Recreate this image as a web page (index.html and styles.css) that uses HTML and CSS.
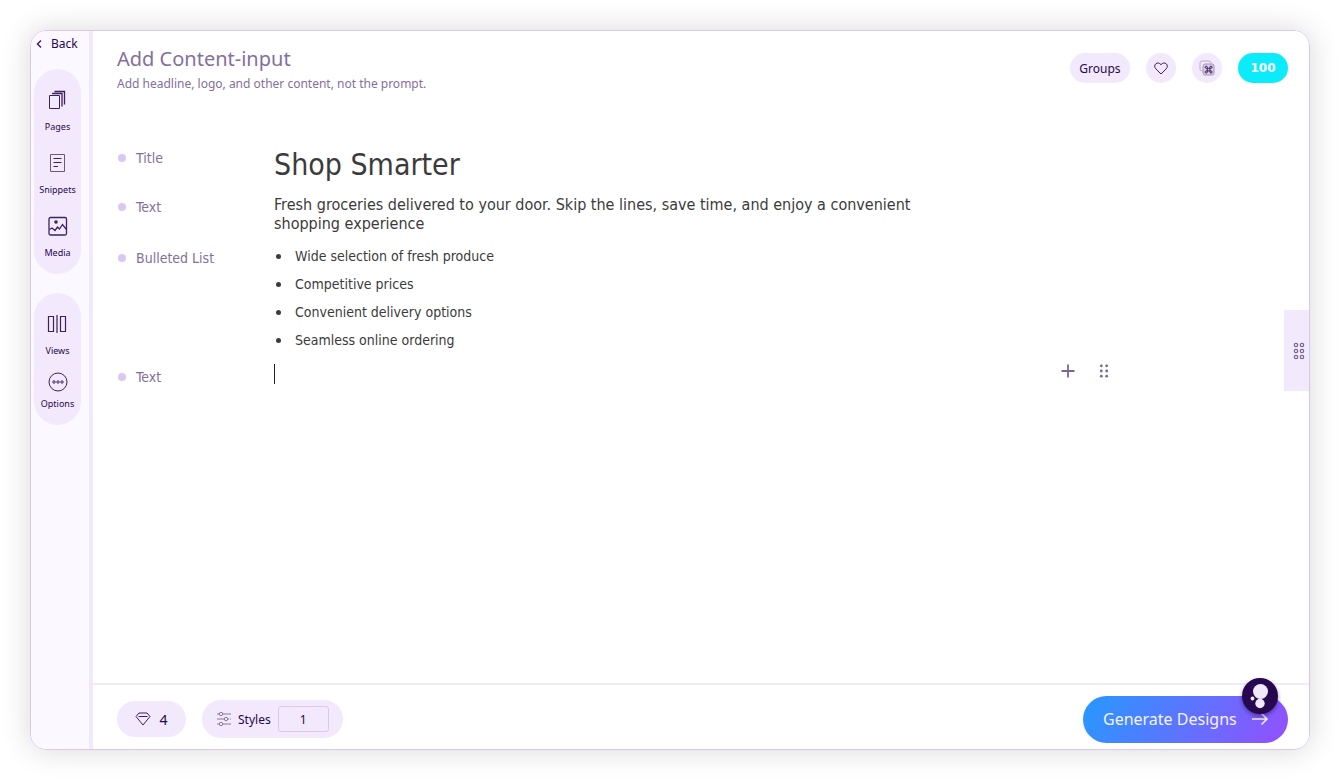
FILE: index.html
```html
<!DOCTYPE html>
<html lang="en">
<head>
<meta charset="utf-8">
<meta name="viewport" content="width=device-width, initial-scale=1">
<title>Add Content-input</title>
<link rel="stylesheet" href="styles.css">
</head>
<body>
<div class="window">
  <aside class="sidebar">
    <button class="back" type="button">
      <svg width="6" height="10" viewBox="0 0 6 10"><path d="M5 1.500 1.500 5 5 8.500" stroke-width="1.500"/></svg>
      Back
    </button>
    <nav class="pill pill-main">
      <button class="tool" type="button">
        <svg width="20" height="20" viewBox="0 0 20 20"><path d="M2.500 5.500h10v13h-10z"/><path d="M5 3.500h10v13M7.500 1.500h10v13" stroke-width="1.300"/></svg>
        Pages
      </button>
      <button class="tool" type="button">
        <svg width="20" height="20" viewBox="0 0 20 20"><path d="M3.500 1.500h14v17h-14z" stroke="#6b5684"/><path d="M6.500 5.500h8M6.500 9.500h8M6.500 13.500H11"/></svg>
        Snippets
      </button>
      <button class="tool" type="button">
        <svg width="20" height="20" viewBox="0 0 20 20"><rect x="1" y="1.500" width="17.500" height="17.500" rx="1.500" stroke-width="1.300"/><path d="m1.500 13.500 2.500-1.500 3 2.500L9.500 11l2 2 3-4.500 4 5" stroke-width="1.300"/><circle class="solid" cx="8" cy="6" r="1.800"/></svg>
        Media
      </button>
    </nav>
    <nav class="pill pill-view">
      <button class="tool" type="button">
        <svg width="20" height="20" viewBox="0 0 20 20"><path d="M1.500 2.500h5v15h-5zM13.500 2.500h5v15h-5zM10 1v18" stroke-width="1.200"/></svg>
        Views
      </button>
      <button class="tool tool-tight" type="button">
        <svg width="20" height="20" viewBox="0 0 20 20"><circle cx="10" cy="10" r="9"/><circle cx="6" cy="10" r="1.200"/><circle cx="10" cy="10" r="1.200"/><circle cx="14" cy="10" r="1.200"/></svg>
        Options
      </button>
    </nav>
  </aside>
  <main class="main">
    <header class="header">
      <div>
        <h1 class="page-title">Add Content-input</h1>
        <p class="subtitle">Add headline, logo, and other content, not the prompt.</p>
      </div>
      <div class="actions">
        <button class="chip groups" type="button">Groups</button>
        <button class="chip round" type="button" aria-label="Favourites">
          <svg width="14" height="13" viewBox="0 0 14 13"><path d="M7 12 1.800 6.800C.3 5.200.4 3 1.800 1.800 3.300.4 5.500.8 7 2.700 8.500.8 10.700.4 12.200 1.800c1.400 1.200 1.500 3.400 0 5z"/></svg>
        </button>
        <button class="chip round" type="button" aria-label="Shortcuts">
          <svg width="16" height="16" viewBox="0 0 16 16"><path d="M3.500 11H3a2 2 0 0 1-2-2V3a2 2 0 0 1 2-2h7a2 2 0 0 1 2 2v.5" stroke="#b8a9c6"/><rect x="4" y="4" width="11" height="11" rx="2" fill="#dbd0e8" stroke="#a493b4"/><path d="M8.300 8.300h2.600v2.600H8.300zM8.300 8.300H7.200a1.100 1.100 0 1 1 1.100-1.100zM10.900 8.300V7.200A1.100 1.100 0 1 1 12 8.300zM8.300 10.900V12a1.100 1.100 0 1 1-1.100-1.100zM10.900 10.900H12a1.100 1.100 0 1 1-1.100 1.100z"/></svg>
        </button>
        <button class="chip credits" type="button">100</button>
      </div>
    </header>
    <section class="editor">
      <div class="row">
        <span class="label">Title</span>
        <h2 class="headline">Shop Smarter</h2>
      </div>
      <div class="row row-text">
        <span class="label">Text</span>
        <p class="copy">Fresh groceries delivered to your door. Skip the lines, save time, and enjoy a convenient shopping experience</p>
      </div>
      <div class="row row-list">
        <span class="label">Bulleted List</span>
        <ul class="bullets">
          <li>Wide selection of fresh produce</li>
          <li>Competitive prices</li>
          <li>Convenient delivery options</li>
          <li>Seamless online ordering</li>
        </ul>
      </div>
      <div class="row row-new">
        <label class="label" for="new-text">Text</label>
        <div class="entry">
          <input class="entry-input" id="new-text" type="text">
          <div class="entry-tools">
            <button class="plain" type="button" aria-label="Add"><svg width="14" height="14" viewBox="0 0 14 14"><path d="M7 .500v13M.500 7h13" stroke="#7a6693" stroke-width="1.800"/></svg></button>
            <button class="plain" type="button" aria-label="Move"><svg width="10" height="14" viewBox="0 0 10 14"><g class="dots"><circle cx="2.300" cy="1.800" r="1.400"/><circle cx="7.700" cy="1.800" r="1.400"/><circle cx="2.300" cy="7" r="1.400"/><circle cx="7.700" cy="7" r="1.400"/><circle cx="2.300" cy="12.200" r="1.400"/><circle cx="7.700" cy="12.200" r="1.400"/></g></svg></button>
          </div>
        </div>
      </div>
    </section>
    <footer class="footer">
      <button class="chip gems" type="button">
        <svg width="16" height="14" viewBox="0 0 16 14"><path d="M4 1h8l3 3.500L8 13 1 4.500zM3.500 4.500h9"/></svg>
        4
      </button>
      <div class="chip styles">
        <svg width="14" height="14" viewBox="0 0 14 14"><g stroke="#8a789d"><path d="M0 2h2M6 2h8M0 7h7M11 7h1M13 7h1M0 12h2M6 12h8"/><circle cx="4" cy="2" r="1.700"/><circle cx="9" cy="7" r="1.700"/><circle cx="4" cy="12" r="1.700"/></g></svg>
        <label for="styles-count">Styles</label>
        <input class="count" id="styles-count" type="text" value="1">
      </div>
      <div class="submit">
        <button class="generate" type="button">
          Generate Designs
          <svg width="18" height="14" viewBox="0 0 18 14"><path d="M1 7h15M10.500 1.500 16 7l-5.500 5.500" stroke="#f2e8fc" stroke-width="1.600"/></svg>
        </button>
        <button class="helper" type="button" aria-label="Assistant">
          <svg width="36" height="36" viewBox="0 0 36 36"><g fill="#f2e8fc" stroke="none"><circle cx="18.500" cy="13.500" r="7.500"/><circle cx="18" cy="25.500" r="4.700"/><circle cx="10.500" cy="20.500" r="1.900"/></g></svg>
        </button>
      </div>
    </footer>
    <button class="drawer" type="button" aria-label="Open panel">
      <svg width="12" height="18" viewBox="0 0 12 18"><g stroke="#7a6693" stroke-width="1.200"><circle cx="3" cy="3" r="1.700"/><circle cx="9" cy="3" r="1.700"/><circle cx="3" cy="9" r="1.700"/><circle cx="9" cy="9" r="1.700"/><circle cx="3" cy="15" r="1.700"/><circle cx="9" cy="15" r="1.700"/></g></svg>
    </button>
  </main>
</div>
</body>
</html>
```
FILE: styles.css
```css
* { box-sizing: border-box; }
body {
  margin: 0;
  min-height: 100vh;
  padding: 30px 30px 31px;
  display: flex;
  background: #fff;
  color: #27074f;
  font-family: "Noto Sans", sans-serif;
}
button, input { font: inherit; color: inherit; margin: 0; padding: 0; border: 0; background: none; }
h1, h2, p, ul { margin: 0; padding: 0; font-weight: 400; }
svg { display: block; flex: none; fill: none; stroke: #3d2160; stroke-width: 1; }
.solid { fill: #3d2160; stroke: none; }
.dots { fill: #7a6693; stroke: none; }

.window {
  flex: 1;
  display: flex;
  border: 1px solid #dac8f0;
  border-radius: 16px;
  overflow: hidden;
  box-shadow: 0 0 30px rgba(0, 0, 0, 0.16);
}
.sidebar {
  width: 62px;
  flex: none;
  padding-left: 3px;
  border-right: 4px solid #f2e9fc;
  background: #fbf8ff;
  display: flex;
  flex-direction: column;
  align-items: flex-start;
}
.back { display: flex; align-items: center; gap: 9px; height: 25px; padding-left: 2px; font-size: 12px; }
.pill {
  width: 47px;
  border-radius: 24px;
  background: #f2e9fc;
  display: flex;
  flex-direction: column;
  align-items: center;
}
.pill-main { margin-top: 13px; padding: 21px 0 15px; gap: 20px; }
.pill-view { margin-top: 19px; padding: 21px 0 15px; gap: 15px; }
.tool {
  display: flex;
  flex-direction: column;
  align-items: center;
  gap: 10px;
  font-size: 9px;
  line-height: 13px;
}
.tool-tight { gap: 5px; }

.main { flex: 1; min-width: 0; position: relative; display: flex; flex-direction: column; background: #fff; }
.header { display: flex; justify-content: space-between; align-items: flex-start; padding: 14px 21px 0 24px; color: #846f9d; }
.page-title { font-size: 20px; line-height: 28px; }
.subtitle { font-size: 12px; line-height: 16px; margin-top: 3px; }
.actions { display: flex; gap: 16px; padding-top: 8px; }
.chip {
  display: flex;
  align-items: center;
  justify-content: center;
  border-radius: 20px;
  background: #f2e9fc;
  color: #27074f;
  font-size: 12px;
}
.groups { width: 60px; height: 30px; }
.round { width: 30px; height: 30px; }
.credits { width: 50px; height: 30px; background: #0cebfa; color: #fff; font-family: "DejaVu Sans", sans-serif; font-weight: 700; }

.editor { flex: 1; padding: 52px 24px 0; color: #3b3b3b; font-family: "DejaVu Sans Condensed", "Noto Sans", sans-serif; }
.row { display: grid; grid-template-columns: 157px 1fr; align-items: start; }
.label { display: flex; align-items: center; gap: 10px; margin-top: 4px; font-size: 14px; line-height: 20px; color: #846f9d; }
.label::before { content: ""; width: 8px; height: 8px; margin-left: 1px; border-radius: 50%; background: #dac8f0; }
.headline { font-size: 30px; line-height: 42px; }
.row-text { margin-top: 9px; }
.row-text .label { margin-top: 2px; }
.copy { max-width: 650px; font-size: 16px; line-height: 19px; }
.row-list { margin-top: 9px; }
.row-list .label { margin-top: 6px; }
.bullets { font-size: 14px; line-height: 28px; list-style: none; }
.bullets li { display: flex; align-items: center; gap: 14px; }
.bullets li::before { content: ""; width: 5px; height: 5px; margin-left: 2px; border-radius: 50%; background: #3b3b3b; }
.row-new { margin-top: 10px; }
.row-new .label { margin-top: 3px; }
.entry { display: flex; align-items: flex-start; max-width: 835px; }
.entry-input { flex: 1; min-width: 0; height: 20px; border-left: 1px solid #222; outline: 0; }
.entry-tools { display: flex; gap: 24px; }
.plain { display: flex; }

.footer { height: 66px; flex: none; display: flex; align-items: center; gap: 16px; padding: 4px 21px 0 24px; border-top: 2px solid #f2e9fc; }
.gems { width: 69px; height: 36px; gap: 8px; font-size: 14px; }
.styles { height: 38px; gap: 7px; padding: 0 14px 0 15px; }
.count { width: 51px; height: 26px; border: 1px solid #dac8f0; border-radius: 3px; text-align: center; }
.submit { position: relative; margin-left: auto; }
.generate {
  display: flex;
  align-items: center;
  justify-content: space-between;
  width: 205px;
  height: 47px;
  padding: 0 19px 0 20px;
  border-radius: 24px;
  background: linear-gradient(120deg, #2699ff, #944fff);
  color: #f7f1ff;
  font-size: 16px;
}
.helper {
  position: absolute;
  top: -18px;
  right: 10px;
  border-radius: 50%;
  background: #27074f;
  box-shadow: 0 2px 4px rgba(0, 0, 0, 0.4);
}
.drawer {
  position: absolute;
  top: 279px;
  right: 0;
  width: 25px;
  height: 81px;
  padding-left: 9px;
  background: #f2e9fc;
}
```
